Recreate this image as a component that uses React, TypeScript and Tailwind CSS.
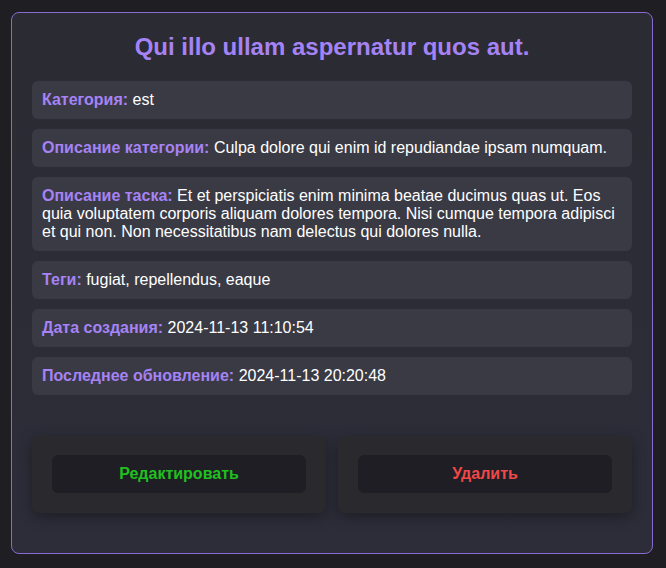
const task = {
  title: "Qui illo ullam aspernatur quos aut.",
  category: "est",
  categoryDescription: "Culpa dolore qui enim id repudiandae ipsam numquam.",
  description:
    "Et et perspiciatis enim minima beatae ducimus quas ut. Eos quia voluptatem corporis aliquam dolores tempora. Nisi cumque tempora adipisci et qui non. Non necessitatibus nam delectus qui dolores nulla.",
  tags: ["fugiat", "repellendus", "eaque"],
  createdAt: "2024-11-13 11:10:54",
  updatedAt: "2024-11-13 20:20:48",
};

function Field({ label, value }: { label: string; value: string }) {
  return (
    <div className="bg-[#3a3a45] rounded-md px-[10px] py-[10px] text-[16px] leading-[18px] text-white">
      <span className="font-bold text-[#a683f5]">{label}:</span> {value}
    </div>
  );
}

export default function App() {
  return (
    <div className="min-h-screen bg-[#1e1e23] pt-3 pb-3 font-['Liberation_Sans',Arial,sans-serif]">
      <div className="w-[642px] ml-[11px] rounded-lg border border-[#8a6bd1] bg-gradient-to-b from-[#2b2b33] to-[#2d2d3a] px-5 pt-5 pb-5">
        <h1 className="text-center text-[24px] leading-[28px] font-bold text-[#a683f5] mb-[20px]">
          {task.title}
        </h1>

        {/* task fields */}
        <div className="flex flex-col gap-[10px]">
          <Field label="Категория" value={task.category} />
          <Field label="Описание категории" value={task.categoryDescription} />
          <Field label="Описание таска" value={task.description} />
          <Field label="Теги" value={task.tags.join(", ")} />
          <Field label="Дата создания" value={task.createdAt} />
          <Field label="Последнее обновление" value={task.updatedAt} />
        </div>

        {/* actions */}
        <div className="grid grid-cols-2 gap-3 mt-[41px] mb-5">
          <div className="bg-[#2a2a2e] rounded-lg px-5 pt-[19px] pb-5 shadow-[0_4px_14px_rgba(0,0,0,0.35)]">
            <button className="w-full h-[38px] rounded-md bg-[#1f1e24] text-[16px] font-bold text-[#1fc01f]">
              Редактировать
            </button>
          </div>
          <div className="bg-[#2a2a2e] rounded-lg px-5 pt-[19px] pb-5 shadow-[0_4px_14px_rgba(0,0,0,0.35)]">
            <button className="w-full h-[38px] rounded-md bg-[#1f1e24] text-[16px] font-bold text-[#f04848]">
              Удалить
            </button>
          </div>
        </div>
      </div>
    </div>
  );
}
